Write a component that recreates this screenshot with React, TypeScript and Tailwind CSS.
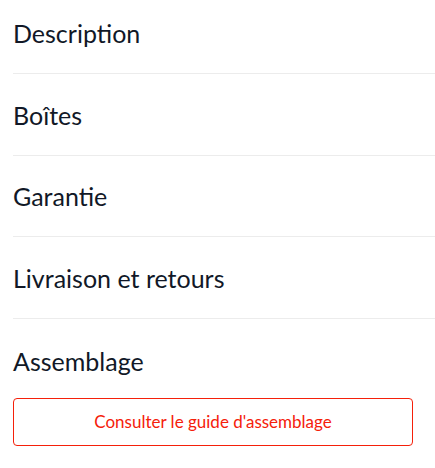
import React from 'react';

const sections = ['Description', 'Boîtes', 'Garantie', 'Livraison et retours'];

const App = () => {
  return (
    <div className="min-h-screen bg-white font-['Lato',_sans-serif] text-[#111827]">
      <div className="pl-[13px]">
        {sections.map((title, i) => (
          <div
            key={title}
            className={`flex items-center border-b border-[#ececec] ${
              i === 0 ? 'h-[74px] pb-[8px]' : i === 2 ? 'h-[81px]' : 'h-[82px]'
            }`}
          >
            <h2 className="text-[25px] leading-[32px] font-normal">{title}</h2>
          </div>
        ))}
        <div className="pt-[26px]">
          <h2 className="text-[25px] leading-[32px] font-normal">Assemblage</h2>
          <button className="mt-[21px] w-[400px] h-[48px] rounded-[4px] border border-[#f5200a] text-[#f5200a] text-[17px]">
            Consulter le guide d'assemblage
          </button>
        </div>
      </div>
    </div>
  );
};

export default App;
